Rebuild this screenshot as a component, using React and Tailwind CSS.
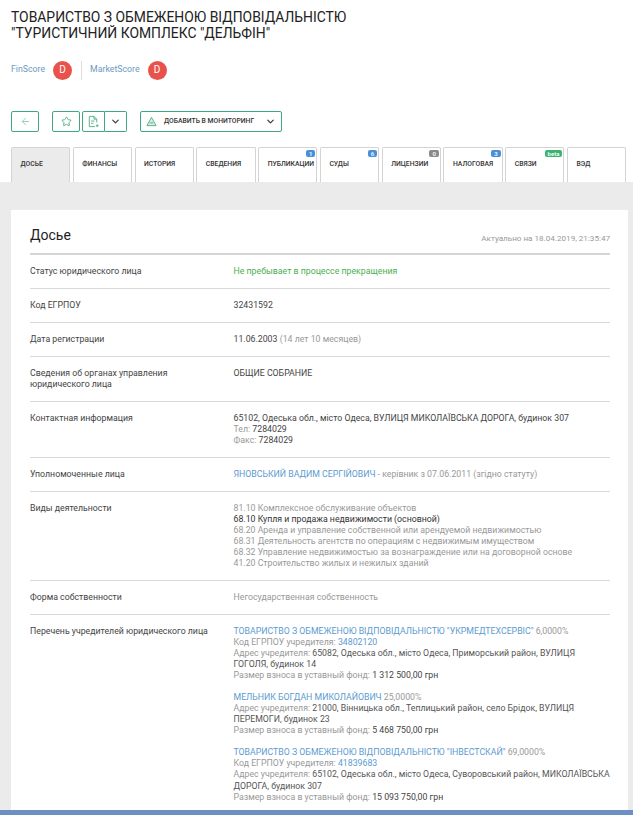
import { ArrowLeft, Star, ChevronDown } from 'lucide-react';

const tabs = [
  { name: 'ДОСЬЕ', active: true },
  { name: 'ФИНАНСЫ' },
  { name: 'ИСТОРИЯ' },
  { name: 'СВЕДЕНИЯ' },
  { name: 'ПУБЛИКАЦИИ', badge: '1', color: 'bg-[#4a90d9]' },
  { name: 'СУДЫ', badge: '6', color: 'bg-[#4a90d9]' },
  { name: 'ЛИЦЕНЗИИ', badge: '0', color: 'bg-[#8a8a8a]' },
  { name: 'НАЛОГОВАЯ', badge: '3', color: 'bg-[#4a90d9]' },
  { name: 'СВЯЗИ', badge: 'beta', color: 'bg-[#3cb371]' },
  { name: 'ВЭД' },
];

const FileAddIcon = () => (
  <svg width="13" height="13" viewBox="0 0 14 14" fill="none" stroke="#4fae86" strokeWidth="1">
    <path d="M8.5 12.5H2.5V1.5H7.5L10.5 4.5V8" />
    <path d="M7.5 1.5V4.5H10.5" />
    <path d="M4.5 6.5H8M4.5 9H7" />
    <path d="M11 10V13M9.5 11.5H12.5" />
  </svg>
);

const MonitorIcon = () => (
  <svg width="11" height="11" viewBox="0 0 12 12" fill="#d9efe5" stroke="#4fae86" strokeWidth="1">
    <path d="M6 1.5L11 10.5H1L6 1.5Z" />
    <path d="M4 7.5H8" />
  </svg>
);

const Row = ({ label, children, className = 'h-[34px]' }) => (
  <div className={`flex pt-[11px] border-b border-[#d9d9d9] ${className}`}>
    <div className="w-[203.5px] shrink-0 pr-[40px] text-[#444]">{label}</div>
    <div className="flex-1 min-w-0">{children}</div>
  </div>
);

const Founder = ({ name, percent, code, address, fund }) => (
  <div className="mb-[10.7px]">
    <div>
      <span className="text-[#5b9bd0]">{name}</span> <span className="text-[#999]">{percent}</span>
    </div>
    {code && (
      <div className="text-[#999]">
        Код ЕГРПОУ учредителя: <span className="text-[#5b9bd0]">{code}</span>
      </div>
    )}
    <div className="text-[#555]">
      <span className="text-[#999]">Адрес учредителя:</span> {address}
    </div>
    <div className="text-[#999]">
      Размер взноса в уставный фонд: <span className="text-[#444]">{fund}</span>
    </div>
  </div>
);

export default function App() {
  return (
    <div className="w-[633px] h-[815px] overflow-hidden bg-white flex flex-col font-['Roboto',sans-serif] text-[8.75px] leading-[11.1px]">
      {/* header */}
      <div className="h-[182px] shrink-0 pl-[11px] pt-[10px]">
        <h1 className="text-[13.9px] leading-[15.5px] text-[#222]">
          ТОВАРИСТВО З ОБМЕЖЕНОЮ ВІДПОВІДАЛЬНІСТЮ
          <br />
          "ТУРИСТИЧНИЙ КОМПЛЕКС "ДЕЛЬФІН"
        </h1>

        <div className="flex items-center mt-[19px] h-[20px] text-[#6b9ac4]">
          <span>FinScore</span>
          <span className="ml-[8px] w-[19px] h-[19px] rounded-full bg-[#e8524a] text-white text-[10px] flex items-center justify-center">D</span>
          <span className="ml-[9px] mr-[8px] w-px h-[19px] bg-[#ddd]" />
          <span>MarketScore</span>
          <span className="ml-[8px] w-[19px] h-[19px] rounded-full bg-[#e8524a] text-white text-[10px] flex items-center justify-center">D</span>
        </div>

        <div className="flex items-center mt-[31px] h-[21px] text-[#4fae86]">
          <button className="w-[28px] h-[21px] border border-[#3fa87c] rounded-[2px] flex items-center justify-center">
            <ArrowLeft size={11} className="text-[#8fd0b0]" />
          </button>
          <button className="ml-[13px] w-[28px] h-[21px] border border-[#3fa87c] rounded-[2px] flex items-center justify-center">
            <Star size={11} />
          </button>
          <button className="ml-[2px] w-[23px] h-[21px] border border-[#3fa87c] rounded-l-[2px] flex items-center justify-center">
            <FileAddIcon />
          </button>
          <button className="w-[22px] h-[21px] border border-l-0 border-[#3fa87c] rounded-r-[2px] flex items-center justify-center">
            <ChevronDown size={11} strokeWidth={2.5} className="text-[#333]" />
          </button>
          <button className="ml-[13px] w-[142px] h-[21px] border border-[#3fa87c] rounded-[2px] flex items-center pl-[5px] pr-[5px]">
            <MonitorIcon />
            <span className="ml-[7px] flex-1 text-left text-[6.8px] text-[#333] font-medium">ДОБАВИТЬ В МОНИТОРИНГ</span>
            <ChevronDown size={11} strokeWidth={2.5} className="text-[#333]" />
          </button>
        </div>

        <div className="flex gap-[2.6px] mt-[15px]">
          {tabs.map((tab) => (
            <div
              key={tab.name}
              className={`relative w-[59.2px] shrink-0 h-[35px] border border-b-0 border-[#d4d4d4] rounded-t-[2px] flex items-center pl-[8.5px] text-[6.8px] text-[#333] font-medium ${tab.active ? 'bg-[#ebebeb]' : 'bg-white'}`}
            >
              {tab.name}
              {tab.badge && (
                <span className={`absolute top-[2px] right-[1px] rounded-[2px] px-[3px] text-[6px] leading-[7px] text-white ${tab.color}`}>{tab.badge}</span>
              )}
            </div>
          ))}
        </div>
      </div>

      {/* main */}
      <div className="flex-1 min-h-0 bg-[#ebebeb] pl-[11px] pt-[28px]">
        <div className="w-[617px] h-[600px] bg-white pl-[19px] pr-[18px] pt-[15px]">
          <div className="flex items-end justify-between h-[30px] border-b-2 border-[#d5d5d5] pb-[9px]">
            <h2 className="text-[14px] leading-[18px] text-[#222]">Досье</h2>
            <span className="text-[8.1px] text-[#999]">Актуально на 18.04.2019, 21:35:47</span>
          </div>
          <Row label="Статус юридического лица">
            <span className="text-[#4caf50]">Не пребывает в процессе прекращения</span>
          </Row>
          <Row label="Код ЕГРПОУ"><span className="text-[#444]">32431592</span></Row>
          <Row label="Дата регистрации">
            <span className="text-[#444]">11.06.2003</span> <span className="text-[#999]">(14 лет 10 месяцев)</span>
          </Row>
          <Row label="Сведения об органах управления юридического лица" className="h-[45px]">
            <span className="text-[#444]">ОБЩИЕ СОБРАНИЕ</span>
          </Row>
          <Row label="Контактная информация" className="h-[56px]">
            <div className="text-[#444]">65102, Одеська обл., місто Одеса, ВУЛИЦЯ МИКОЛАЇВСЬКА ДОРОГА, будинок 307</div>
            <div className="text-[#999]">Тел: <span className="text-[#444]">7284029</span></div>
            <div className="text-[#999]">Факс: <span className="text-[#444]">7284029</span></div>
          </Row>
          <Row label="Уполномоченные лица">
            <span className="text-[#5b9bd0]">ЯНОВСЬКИЙ ВАДИМ СЕРГІЙОВИЧ</span>
            <span className="text-[#999]"> - керівник з 07.06.2011 (згідно статуту)</span>
          </Row>
          <Row label="Виды деятельности" className="h-[89px]">
            <div className="text-[#999]">
              <div>81.10 Комплексное обслуживание объектов</div>
              <div className="text-[#333]">68.10 Купля и продажа недвижимости (основной)</div>
              <div>68.20 Аренда и управление собственной или арендуемой недвижимостью</div>
              <div>68.31 Деятельность агентств по операциям с недвижимым имуществом</div>
              <div>68.32 Управление недвижимостью за вознаграждение или на договорной основе</div>
              <div>41.20 Строительство жилых и нежилых зданий</div>
            </div>
          </Row>
          <Row label="Форма собственности"><span className="text-[#999]">Негосударственная собственность</span></Row>
          <div className="flex pt-[11px]">
            <div className="w-[203.5px] shrink-0 text-[#444]">Перечень учредителей юридического лица</div>
            <div className="flex-1 min-w-0">
              <Founder
                name={'ТОВАРИСТВО З ОБМЕЖЕНОЮ ВІДПОВІДАЛЬНІСТЮ "УКРМЕДТЕХСЕРВІС"'}
                percent="6,0000%"
                code="34802120"
                address="65082, Одеська обл., місто Одеса, Приморський район, ВУЛИЦЯ ГОГОЛЯ, будинок 14"
                fund="1 312 500,00 грн"
              />
              <Founder
                name="МЕЛЬНИК БОГДАН МИКОЛАЙОВИЧ"
                percent="25,0000%"
                address="21000, Вінницька обл., Теплицький район, село Брідок, ВУЛИЦЯ ПЕРЕМОГИ, будинок 23"
                fund="5 468 750,00 грн"
              />
              <Founder
                name={'ТОВАРИСТВО З ОБМЕЖЕНОЮ ВІДПОВІДАЛЬНІСТЮ "ІНВЕСТСКАЙ"'}
                percent="69,0000%"
                code="41839683"
                address="65102, Одеська обл., місто Одеса, Суворовський район, МИКОЛАЇВСЬКА ДОРОГА, будинок 307"
                fund="15 093 750,00 грн"
              />
            </div>
          </div>
        </div>
      </div>

      <div className="h-[5px] shrink-0 bg-[#6c8fc4]" />
    </div>
  );
}
